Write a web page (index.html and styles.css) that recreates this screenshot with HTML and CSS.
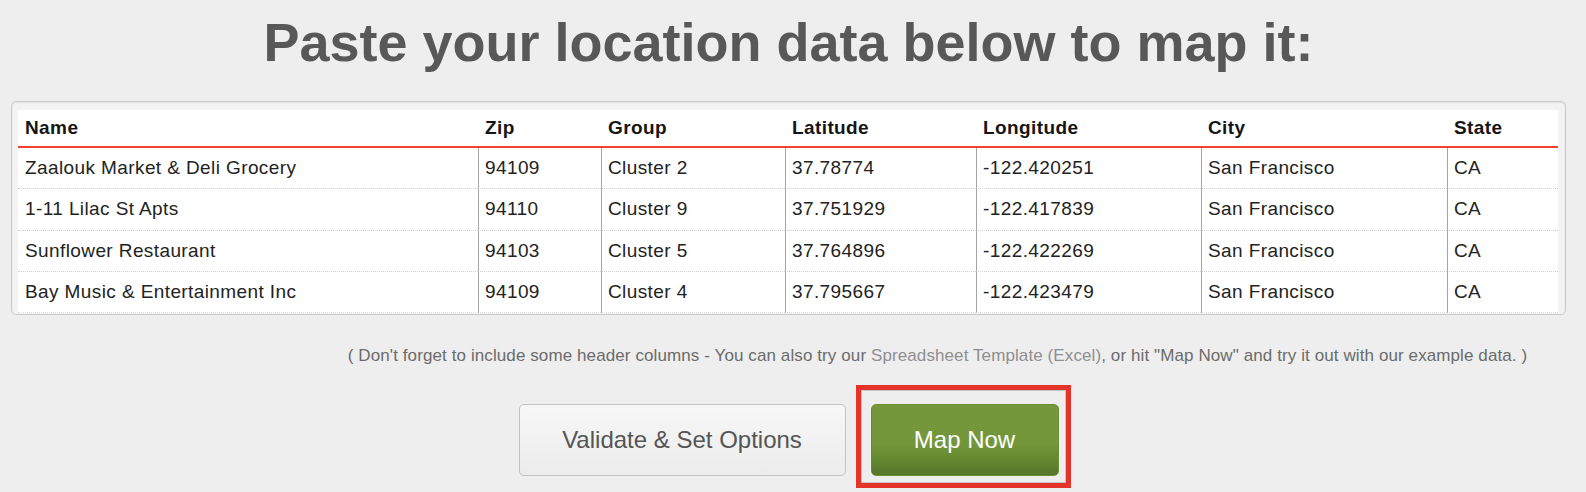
FILE: index.html
```html
<!DOCTYPE html>
<html lang="en">
<head>
<meta charset="utf-8">
<title>Paste your location data</title>
<link rel="stylesheet" href="styles.css">
</head>
<body>
<div class="page">
  <h1 class="title">Paste your location data below to map it:</h1>
  <div class="frame">
    <table class="data">
      <colgroup>
        <col class="c-name"><col class="c-zip"><col class="c-group"><col class="c-lat"><col class="c-lng"><col class="c-city"><col class="c-state">
      </colgroup>
      <thead>
        <tr><th>Name</th><th>Zip</th><th>Group</th><th>Latitude</th><th>Longitude</th><th>City</th><th>State</th></tr>
      </thead>
      <tbody>
        <tr><td>Zaalouk Market &amp; Deli Grocery</td><td>94109</td><td>Cluster 2</td><td>37.78774</td><td>-122.420251</td><td>San Francisco</td><td>CA</td></tr>
        <tr><td>1-11 Lilac St Apts</td><td>94110</td><td>Cluster 9</td><td>37.751929</td><td>-122.417839</td><td>San Francisco</td><td>CA</td></tr>
        <tr><td>Sunflower Restaurant</td><td>94103</td><td>Cluster 5</td><td>37.764896</td><td>-122.422269</td><td>San Francisco</td><td>CA</td></tr>
        <tr><td>Bay Music &amp; Entertainment Inc</td><td>94109</td><td>Cluster 4</td><td>37.795667</td><td>-122.423479</td><td>San Francisco</td><td>CA</td></tr>
      </tbody>
    </table>
  </div>
  <p class="note">( Don't forget to include some header columns - You can also try our <a class="link" href="#">Spreadsheet Template (Excel)</a>, or hit "Map Now" and try it out with our example data. )</p>
  <div class="actions">
    <button class="btn btn-validate" type="button">Validate &amp; Set Options</button>
    <div class="highlight-wrap">
      <button class="btn btn-map" type="button">Map Now</button>
      <span class="highlight"></span>
    </div>
  </div>
</div>
</body>
</html>
```

FILE: styles.css
```css
html, body {
  margin: 0;
  padding: 0;
  background: #eeeeee;
  overflow: hidden;
}

body {
  font-family: "Liberation Sans", Arial, Helvetica, sans-serif;
  color: #222;
}

.page {
  width: 1555px;
  min-height: 480px;
  margin-left: 11px;
  padding-top: 12px;
}

.title {
  margin: 0;
  height: 89px;
  font-size: 54px;
  line-height: 60px;
  font-weight: bold;
  color: #585858;
  text-align: center;
}

.frame {
  border: 1px solid #c9c9c9;
  border-radius: 5px;
  background: #f3f3f3;
  padding: 8px 7px 1px 6px;
  box-shadow: inset 0 1px 2px rgba(0, 0, 0, 0.08);
}

.data {
  width: 1540px;
  table-layout: fixed;
  border-collapse: separate;
  border-spacing: 0;
  background: #ffffff;
  font-size: 19px;
  letter-spacing: 0.4px;
}

.c-name { width: 460px; }
.c-zip { width: 123px; }
.c-group { width: 184px; }
.c-lat { width: 191px; }
.c-lng { width: 225px; }
.c-city { width: 246px; }
.c-state { width: 111px; }

.data th {
  height: 36px;
  padding: 0 7px;
  text-align: left;
  font-weight: bold;
  color: #151515;
  border-bottom: 2px solid #f4402e;
  white-space: nowrap;
}

.data td {
  height: 40.3px;
  padding: 0 7px;
  color: #222;
  white-space: nowrap;
  border-bottom: 1px dotted #cfcfcf;
}

.data td + td {
  border-left: 1px solid #a4a4a8;
  padding-left: 6px;
}

.data tbody tr:last-child td {
  border-bottom: 1px dotted #e0e0e0;
}

.note {
  margin: 31px 0 0;
  padding-left: 298px;
  height: 20px;
  font-size: 17px;
  letter-spacing: 0.1px;
  line-height: 20px;
  color: #6b6b6b;
  text-align: center;
  white-space: nowrap;
}

.link {
  color: #8e8e8e;
  text-decoration: none;
}

.actions {
  display: flex;
  justify-content: center;
  align-items: flex-start;
  gap: 25px;
  margin-top: 38px;
}

.btn {
  height: 72px;
  border-radius: 5px;
  font-family: "Liberation Sans", Arial, Helvetica, sans-serif;
  font-size: 24px;
  padding: 0;
  cursor: pointer;
}

.btn-validate {
  width: 327px;
  border: 1px solid #c2c2c2;
  color: #555555;
  background: linear-gradient(#f7f7f7, #ececec);
}

.highlight-wrap {
  position: relative;
  width: 188px;
  height: 72px;
}

.btn-map {
  display: block;
  width: 188px;
  border: 1px solid #6c8d34;
  color: #ffffff;
  background: linear-gradient(#76983b 0%, #74963a 55%, #668a30 75%, #55752a 100%);
}

.highlight {
  position: absolute;
  left: -15px;
  top: -19px;
  width: 215px;
  height: 103px;
  box-sizing: border-box;
  border: 5px solid #e3342a;
  box-shadow: inset 0 0 0 1px #c6c6c6;
  pointer-events: none;
}
```
